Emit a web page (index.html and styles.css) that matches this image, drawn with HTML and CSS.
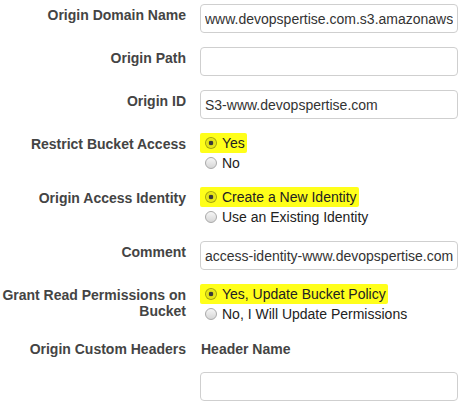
FILE: index.html
```html
<!DOCTYPE html>
<html>
<head>
<meta charset="utf-8">
<link rel="stylesheet" href="styles.css">
</head>
<body>
<form class="form">
  <div class="label">Origin Domain Name</div>
  <div class="ctrl"><input class="text" type="text" value="www.devopspertise.com.s3.amazonaws.com"></div>

  <div class="label">Origin Path</div>
  <div class="ctrl"><input class="text" type="text" value=""></div>

  <div class="label">Origin ID</div>
  <div class="ctrl"><input class="text" type="text" value="S3-www.devopspertise.com"></div>

  <div class="label">Restrict Bucket Access</div>
  <div class="ctrl radios">
    <label class="opt hl"><input type="radio" name="rba" checked><span>Yes</span></label>
    <label class="opt"><input type="radio" name="rba"><span>No</span></label>
  </div>

  <div class="label">Origin Access Identity</div>
  <div class="ctrl radios">
    <label class="opt hl"><input type="radio" name="oai" checked><span>Create a New Identity</span></label>
    <label class="opt"><input type="radio" name="oai"><span>Use an Existing Identity</span></label>
  </div>

  <div class="label">Comment</div>
  <div class="ctrl"><input class="text" type="text" value="access-identity-www.devopspertise.com.s3.amazonaws.com"></div>

  <div class="label">Grant Read Permissions on Bucket</div>
  <div class="ctrl radios">
    <label class="opt hl"><input type="radio" name="grp" checked><span>Yes, Update Bucket Policy</span></label>
    <label class="opt"><input type="radio" name="grp"><span>No, I Will Update Permissions</span></label>
  </div>

  <div class="label">Origin Custom Headers</div>
  <div class="ctrl headers">
    <div class="subhead">Header Name</div>
    <input class="text" type="text" value="">
  </div>
</form>
</body>
</html>
```

FILE: styles.css
```css
html, body {
  margin: 0;
  padding: 0;
  background: #ffffff;
}
body {
  font-family: "Liberation Sans", Arial, sans-serif;
  font-size: 14px;
  color: #333;
}
.form {
  display: grid;
  grid-template-columns: 186px 258px;
  column-gap: 14px;
  row-gap: 14px;
  padding-top: 4px;
}
.label {
  text-align: right;
  font-weight: bold;
  color: #444;
  line-height: 16px;
  padding-top: 3px;
}
.text {
  box-sizing: border-box;
  display: block;
  width: 258px;
  height: 29px;
  margin: 0;
  border: 1px solid #cfcfcf;
  border-radius: 4px;
  padding: 0 4px;
  font-family: "Liberation Sans", Arial, sans-serif;
  font-size: 14px;
  color: #333;
  background: #fff;
  outline: none;
}
.radios {
  display: flex;
  flex-direction: column;
  align-items: flex-start;
}
.opt {
  display: flex;
  align-items: center;
  height: 20px;
  padding: 0 2px 0 5px;
  color: #222;
  line-height: 20px;
}
.opt.hl {
  background: #ffff1a;
  border-radius: 2px;
}
.opt input {
  -webkit-appearance: none;
  appearance: none;
  box-sizing: border-box;
  width: 12px;
  height: 12px;
  margin: 0 5px 0 0;
  border: 1px solid #a9a9a9;
  border-radius: 50%;
  background: linear-gradient(#f6f6f6, #d6d6d6);
}
.opt input:checked {
  border-color: rgba(0, 0, 0, 0.3);
  background: radial-gradient(circle, #3a3a3a 0, #3a3a3a 2px, rgba(0, 0, 0, 0.12) 2.6px, rgba(0, 0, 0, 0.05) 6px);
}
.headers {
  display: flex;
  flex-direction: column;
}
.subhead {
  font-weight: bold;
  color: #444;
  line-height: 16px;
  padding-top: 3px;
  padding-left: 1px;
  margin-bottom: 15px;
}
```
